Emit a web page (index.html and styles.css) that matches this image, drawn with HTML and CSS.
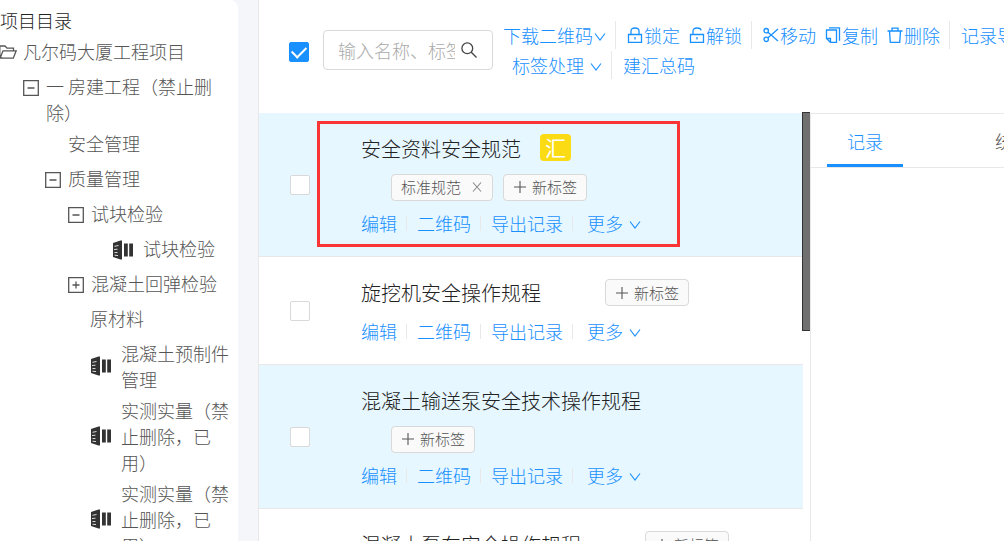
FILE: index.html
```html
<!DOCTYPE html>
<html lang="zh-CN">
<head>
    <meta charset="UTF-8">
    <meta name="viewport" content="width=device-width, initial-scale=1.0">
    <title>项目目录</title>

    <link rel="stylesheet" href="styles.css">
</head>
<body>

<!-- Shared icons -->
<svg class="icon-defs" aria-hidden="true">
    <symbol id="icon-down" viewBox="0 0 12 12"><path d="M1 2.500L6 9L11 2.500"/></symbol>
    <symbol id="icon-plus" viewBox="0 0 12 12"><path d="M6 0v12M0 6h12"/></symbol>
    <symbol id="icon-close" viewBox="0 0 12 12"><path d="M2 1.500l8 9M10 1.500l-8 9"/></symbol>
    <symbol id="icon-minus-box" viewBox="0 0 16 16"><path d="M.7.7h14.600v14.600H.7zM4.500 8h7"/></symbol>
    <symbol id="icon-plus-box" viewBox="0 0 16 16"><path d="M.7.7h14.600v14.600H.7zM4.500 8h7M8 4.500v7"/></symbol>
    <symbol id="icon-folder" viewBox="0 0 18 16"><path d="M3.500 14L.8 13.500V2h5.200l2 2.200h6.500v2.600M1 14.200l3-7.400h13.200l-2.900 7.400z"/></symbol>
    <symbol id="icon-device" viewBox="0 0 22 20">
        <path class="fill" d="M1 3L8.500.5h1.500v19H8.500L1 17zM12 3.500h3.800v13H12zM17.200 3.500H21v13h-3.800z"/>
        <path class="slot" d="M2.500 6.300l4-.8M2 9.500l3.500-.3M2.500 12.500l3 .1M2.500 15.200l3.500.4"/>
    </symbol>
    <symbol id="icon-lock" viewBox="0 0 16 16"><path d="M1.500 7.500h13v8h-13zM4 7.500V4q0-3 4-3t4 3v3.500M8 10v2.500"/></symbol>
    <symbol id="icon-unlock" viewBox="0 0 16 16"><path d="M1.500 7.500h13v8h-13zM4 7.500V4q0-3 4-3t4 2.500M8 10v2.500"/></symbol>
    <symbol id="icon-cut" viewBox="0 0 16 16"><path d="M5 5.200L15 14M5 10.800L15 2"/><circle cx="3.200" cy="3.700" r="2.200"/><circle cx="3.200" cy="12.300" r="2.200"/></symbol>
    <symbol id="icon-copy" viewBox="0 0 16 16"><path d="M1.500 3h10v12.500H5.500l-4-4zM1.500 11.500h4v4M4 .8h10.500v13"/></symbol>
    <symbol id="icon-delete" viewBox="0 0 16 16"><path d="M.5 4h15M5 4V1.200h6V4M2.500 4l.8 11.300h9.400L13.500 4"/></symbol>
    <symbol id="icon-search" viewBox="0 0 16 16"><circle cx="6.300" cy="6.300" r="5.400"/><path d="M10.300 10.300l5.200 5.200"/></symbol>
</svg>

<div class="page">
    <aside class="sidebar">
        <h1 class="sidebar-title">项目目录</h1>
        <ul class="tree">
            <li class="node level-0"><svg class="icon-folder"><use href="#icon-folder"/></svg><span>凡尔码大厦工程项目</span></li>
            <li class="node level-1"><svg class="icon-box"><use href="#icon-minus-box"/></svg><span>一 房建工程（禁止删除）</span></li>
            <li class="node level-3"><span>安全管理</span></li>
            <li class="node level-2"><svg class="icon-box"><use href="#icon-minus-box"/></svg><span>质量管理</span></li>
            <li class="node level-3"><svg class="icon-box"><use href="#icon-minus-box"/></svg><span>试块检验</span></li>
            <li class="node level-5"><svg class="icon-device"><use href="#icon-device"/></svg><span>试块检验</span></li>
            <li class="node level-3"><svg class="icon-box"><use href="#icon-plus-box"/></svg><span>混凝土回弹检验</span></li>
            <li class="node level-4"><span>原材料</span></li>
            <li class="node level-4"><svg class="icon-device"><use href="#icon-device"/></svg><span>混凝土预制件管理</span></li>
            <li class="node level-4"><svg class="icon-device"><use href="#icon-device"/></svg><span>实测实量（禁止删除，已用）</span></li>
            <li class="node level-4"><svg class="icon-device"><use href="#icon-device"/></svg><span>实测实量（禁止删除，已用）</span></li>
        </ul>
    </aside>

    <main class="main">
        <header class="toolbar">
            <input type="checkbox" class="checkbox" aria-label="全选" checked>
            <div class="search">
                <input type="text" class="search-input" placeholder="输入名称、标签" aria-label="搜索">
                <button class="search-btn" aria-label="搜索"><svg class="icon"><use href="#icon-search"/></svg></button>
            </div>
            <div class="tools">
                <div class="tools-row">
                    <button class="tool">下载二维码<svg class="icon-small icon-down"><use href="#icon-down"/></svg></button>
                    <span class="split"></span>
                    <button class="tool"><svg class="icon"><use href="#icon-lock"/></svg>锁定</button>
                    <button class="tool"><svg class="icon"><use href="#icon-unlock"/></svg>解锁</button>
                    <span class="split"></span>
                    <button class="tool"><svg class="icon"><use href="#icon-cut"/></svg>移动</button>
                    <button class="tool"><svg class="icon"><use href="#icon-copy"/></svg>复制</button>
                    <button class="tool"><svg class="icon"><use href="#icon-delete"/></svg>删除</button>
                    <span class="split"></span>
                    <button class="tool">记录导出</button>
                </div>
                <div class="tools-row tools-row-second">
                    <button class="tool tool-spaced">标签处理<svg class="icon-small icon-down"><use href="#icon-down"/></svg></button>
                    <span class="split"></span>
                    <button class="tool">建汇总码</button>
                </div>
            </div>
        </header>

        <div class="content">
            <section class="list">
                <article class="item item-active">
                    <input type="checkbox" class="checkbox" aria-label="安全资料安全规范">
                    <div class="item-body">
                        <div class="item-head"><h2 class="item-title">安全资料安全规范</h2><span class="badge">汇</span></div>
                        <div class="tags">
                            <span class="tag">标准规范<button class="tag-close" aria-label="删除标签"><svg class="icon-small"><use href="#icon-close"/></svg></button></span>
                            <button class="tag"><svg class="icon-small"><use href="#icon-plus"/></svg>新标签</button>
                        </div>
                        <div class="actions">
                            <a href="#">编辑</a><a href="#">二维码</a><a href="#">导出记录</a><a href="#" class="more">更多<svg class="icon-small icon-down"><use href="#icon-down"/></svg></a>
                        </div>
                    </div>
                    <div class="highlight"></div>
                </article>

                <article class="item">
                    <input type="checkbox" class="checkbox" aria-label="旋挖机安全操作规程">
                    <div class="item-body">
                        <div class="item-head">
                            <h2 class="item-title">旋挖机安全操作规程</h2>
                            <button class="tag tag-inline"><svg class="icon-small"><use href="#icon-plus"/></svg>新标签</button>
                        </div>
                        <div class="actions">
                            <a href="#">编辑</a><a href="#">二维码</a><a href="#">导出记录</a><a href="#" class="more">更多<svg class="icon-small icon-down"><use href="#icon-down"/></svg></a>
                        </div>
                    </div>
                </article>

                <article class="item item-active">
                    <input type="checkbox" class="checkbox" aria-label="混凝土输送泵安全技术操作规程">
                    <div class="item-body">
                        <div class="item-head"><h2 class="item-title">混凝土输送泵安全技术操作规程</h2></div>
                        <div class="tags">
                            <button class="tag"><svg class="icon-small"><use href="#icon-plus"/></svg>新标签</button>
                        </div>
                        <div class="actions">
                            <a href="#">编辑</a><a href="#">二维码</a><a href="#">导出记录</a><a href="#" class="more">更多<svg class="icon-small icon-down"><use href="#icon-down"/></svg></a>
                        </div>
                    </div>
                </article>

                <article class="item">
                    <input type="checkbox" class="checkbox" aria-label="混凝土泵车安全操作规程">
                    <div class="item-body">
                        <div class="item-head">
                            <h2 class="item-title">混凝土泵车安全操作规程</h2>
                            <button class="tag tag-inline"><svg class="icon-small"><use href="#icon-plus"/></svg>新标签</button>
                        </div>
                        <div class="actions">
                            <a href="#">编辑</a><a href="#">二维码</a><a href="#">导出记录</a><a href="#" class="more">更多<svg class="icon-small icon-down"><use href="#icon-down"/></svg></a>
                        </div>
                    </div>
                </article>
                <div class="scroll-thumb"></div>
            </section>

            <section class="detail">
                <nav class="tabs">
                    <a href="#" class="tab tab-active">记录</a>
                    <a href="#" class="tab">统计</a>
                </nav>
            </section>
        </div>
    </main>
</div>

</body>
</html>
```
FILE: styles.css
```css
* {
    box-sizing: border-box;
}

body {
    margin: 0;
    background: #f5f6fa;
    color: #555;
    font-family: "Noto Sans CJK SC", sans-serif;
    font-size: 18px;
    font-weight: 300;
    line-height: 26px;
}

h1,
h2,
ul {
    margin: 0;
    padding: 0;
    font-weight: 300;
    list-style: none;
}

button {
    padding: 0;
    border: 0;
    background: none;
    color: inherit;
    font: inherit;
    cursor: pointer;
}

a {
    color: #1890ff;
    text-decoration: none;
}

/* Icons */
.icon-defs {
    display: none;
}

svg {
    flex: none;
    fill: none;
    stroke: currentColor;
    stroke-width: 1.3;
}

.icon {
    width: 16px;
    height: 16px;
}

.icon-small {
    width: 12px;
    height: 12px;
}

.icon-down {
    margin-top: 4px;
    stroke-width: 1.1;
}

.icon-box {
    width: 16px;
    height: 16px;
    margin: 7px 7px 0 0;
}

.icon-folder {
    width: 18px;
    height: 16px;
    margin: 6px 6px 0 -1px;
}

.icon-device {
    align-self: center;
    width: 22px;
    height: 20px;
    margin-right: 9px;
    color: #333;
}

.fill {
    fill: currentColor;
    stroke: none;
}

.slot {
    stroke: #ddd;
    stroke-width: 1;
}

/* Page */
.page {
    display: flex;
    gap: 20px;
    height: 100vh;
    overflow: hidden;
}

.sidebar {
    flex: none;
    width: 238px;
    padding: 7px 8px 0 0;
    background: #fff;
    border-radius: 0 8px 0 0;
    overflow: hidden;
}

.sidebar-title {
    padding-bottom: 3px;
    color: #222;
    font-size: 18px;
    line-height: 26px;
}

.node {
    display: flex;
    align-items: flex-start;
    min-height: 35px;
    padding: 2px 0 3px;
}

.level-1 {
    padding-left: 23px;
}

.level-2 {
    padding-left: 45px;
}

.level-3 {
    padding-left: 68px;
}

.level-4 {
    padding-left: 90px;
}

.level-5 {
    padding-left: 112px;
}

.main {
    display: flex;
    flex: 1;
    flex-direction: column;
    min-width: 0;
    background: #fff;
    border-left: 1px solid #e8e8e8;
}

/* Checkbox */
.checkbox {
    display: flex;
    flex: none;
    align-items: center;
    justify-content: center;
    width: 20px;
    height: 20px;
    margin: 0;
    border: 1px solid #d9d9d9;
    border-radius: 2px;
    background: #fff;
    appearance: none;
}

.checkbox:checked {
    border-color: #1890ff;
    background: #1890ff;
}

.checkbox:checked::after {
    content: "";
    width: 12px;
    height: 7px;
    margin-bottom: 3px;
    border: solid #fff;
    border-width: 0 0 2px 2px;
    transform: rotate(-45deg);
}

/* Toolbar */
.toolbar {
    display: flex;
    align-items: flex-start;
    flex: none;
    height: 113px;
    padding: 20px 0 0 30px;
    color: #1890ff;
    overflow: hidden;
}

.toolbar .checkbox {
    margin-top: 22px;
}

.search {
    display: flex;
    flex: none;
    align-items: center;
    width: 170px;
    height: 40px;
    margin: 10px 10px 0 14px;
    padding: 0 15px 0 14px;
    border: 1px solid #d9d9d9;
    border-radius: 4px;
}

.search-input {
    flex: 1;
    min-width: 0;
    margin-right: 6px;
    padding: 0;
    border: 0;
    outline: 0;
    font: inherit;
}

.search-input::placeholder {
    color: #aaa;
}

.search-btn {
    display: flex;
    color: #444;
}

.tools-row {
    display: flex;
    align-items: center;
    height: 30px;
    white-space: nowrap;
}

.tools-row-second {
    padding-left: 9px;
}

.tool {
    display: flex;
    flex: none;
    align-items: center;
    gap: 1px;
}

.tool + .tool {
    margin-left: 9px;
}

.tool-spaced {
    gap: 6px;
}

.split {
    flex: none;
    width: 1px;
    height: 28px;
    margin: 0 11px 0 9px;
    background: #e8e8e8;
}

/* List */
.content {
    display: flex;
    flex: 1;
    min-height: 0;
}

.list {
    position: relative;
    flex: none;
    width: 552px;
    padding-right: 7px;
    border-right: 1px solid #e8e8e8;
}

.item {
    position: relative;
    display: flex;
    align-items: center;
    padding: 20px 0 15px 31px;
    border-bottom: 1px solid #e8e8e8;
}

.item .checkbox {
    margin-bottom: 4px;
}

.item-active {
    background: #e6f7ff;
}

.item-body {
    margin-left: 51px;
}

.item-head,
.tags,
.actions {
    display: flex;
    align-items: center;
    height: 36px;
    white-space: nowrap;
}

.item-head {
    padding-bottom: 5px;
}

.item-title {
    color: #222;
    font-size: 20px;
}

.badge {
    margin: 0 0 3px 19px;
    padding: 0 5px;
    border-radius: 4px;
    background: #fadb14;
    color: #fff;
    font-size: 21px;
    font-weight: 400;
    line-height: 27px;
}

.tags {
    gap: 10px;
    padding-left: 30px;
}

.tag {
    display: flex;
    align-items: center;
    gap: 6px;
    height: 27px;
    padding: 0 9px;
    border: 1px solid #d9d9d9;
    border-radius: 4px;
    background: #fafafa;
    font-size: 15px;
}

.tag .icon-small {
    stroke-width: 1.1;
}

.tag-inline {
    margin-left: 64px;
}

.tag-close {
    display: flex;
    margin-left: 4px;
    color: #888;
}

button.tag {
    padding-left: 10px;
}

.actions a {
    display: flex;
    align-items: center;
}

.actions a + a::before {
    content: "";
    width: 1px;
    height: 15px;
    margin: 0 10px 0 9px;
    background: #e8e8e8;
}

.actions .more::before {
    margin-right: 14px;
}

.more svg {
    margin-left: 6px;
}

.highlight {
    position: absolute;
    top: 8px;
    left: 58px;
    width: 363px;
    height: 126px;
    border: 3px solid #fa3535;
    pointer-events: none;
}

.scroll-thumb {
    position: absolute;
    top: -1px;
    right: 0;
    width: 8px;
    height: 219px;
    border: solid #333;
    border-width: 1px 0 1px 1px;
    background: #707070;
}

/* Detail */
.detail {
    flex: 1;
    min-width: 0;
}

.tabs {
    display: flex;
    gap: 72px;
    height: 55px;
    padding-left: 16px;
    border: solid #e8e8e8;
    border-width: 1px 0;
    overflow: hidden;
}

.tab {
    flex: none;
    padding: 14px 20px 0;
    color: #555;
}

.tab-active {
    border-bottom: 3px solid #1890ff;
    color: #1890ff;
}
```
